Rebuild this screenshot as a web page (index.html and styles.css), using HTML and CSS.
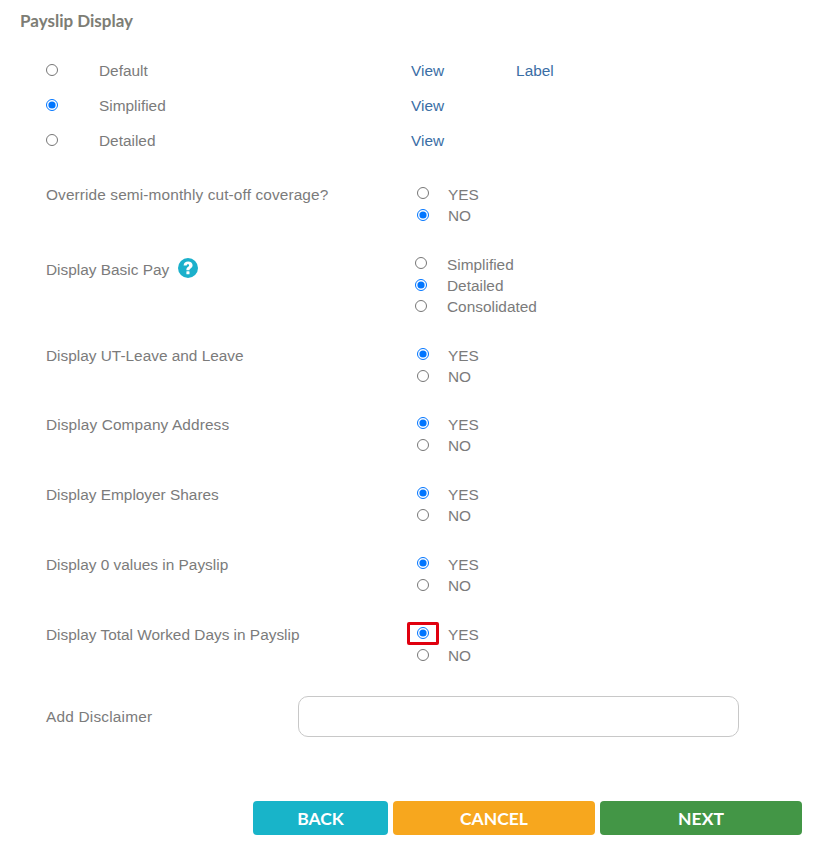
FILE: index.html
```html
<!DOCTYPE html>
<html lang="en">
	<head>
		<meta charset="utf-8">
		<meta name="viewport" content="width=device-width, initial-scale=1.0">
		<title>Payslip Display</title>
		<link rel="stylesheet" href="styles.css">
	</head>
	<body>
		<h1 class="title">Payslip Display</h1>

		<div class="layouts">
			<div class="layout-row">
				<input type="radio" name="layout">
				<span class="layout-name">Default</span>
				<a class="link" href="#">View</a>
				<a class="link link-label" href="#">Label</a>
			</div>
			<div class="layout-row">
				<input type="radio" name="layout" checked>
				<span class="layout-name">Simplified</span>
				<a class="link" href="#">View</a>
			</div>
			<div class="layout-row">
				<input type="radio" name="layout">
				<span class="layout-name">Detailed</span>
				<a class="link" href="#">View</a>
			</div>
		</div>

		<div class="setting setting-first">
			<div class="setting-name setting-name-long">Override semi-monthly cut-off coverage?</div>
			<div class="options">
				<label class="option"><input type="radio" name="override"><span>YES</span></label>
				<label class="option"><input type="radio" name="override" checked><span>NO</span></label>
			</div>
		</div>

		<div class="setting">
			<div class="setting-name setting-name-help">
				Display Basic Pay
				<svg class="help" viewBox="0 0 20 20" width="20" height="20">
					<circle cx="10" cy="10" r="10" fill="#1bb0cb"/>
					<path d="M5.6 7.4C5.7 4.8 7.6 3.4 10.1 3.4c2.6 0 4.5 1.5 4.5 3.8 0 1.6-.9 2.4-2 3.2-.9.6-1.1 1-1.1 1.8H8.4c-.1-1.7.4-2.5 1.5-3.3.8-.6 1.2-1 1.2-1.5 0-.7-.4-1.1-1.1-1.1-.8 0-1.2.5-1.3 1.3z" fill="#fff"/>
					<rect x="8.4" y="13.2" width="3.1" height="3" rx=".5" fill="#fff"/>
				</svg>
			</div>
			<div class="options options-wide">
				<label class="option"><input type="radio" name="basic"><span>Simplified</span></label>
				<label class="option"><input type="radio" name="basic" checked><span>Detailed</span></label>
				<label class="option"><input type="radio" name="basic"><span>Consolidated</span></label>
			</div>
		</div>

		<div class="setting setting-leave">
			<div class="setting-name">Display UT-Leave and Leave</div>
			<div class="options">
				<label class="option"><input type="radio" name="leave" checked><span>YES</span></label>
				<label class="option"><input type="radio" name="leave"><span>NO</span></label>
			</div>
		</div>

		<div class="setting">
			<div class="setting-name setting-name-long">Display Company Address</div>
			<div class="options">
				<label class="option"><input type="radio" name="address" checked><span>YES</span></label>
				<label class="option"><input type="radio" name="address"><span>NO</span></label>
			</div>
		</div>

		<div class="setting">
			<div class="setting-name">Display Employer Shares</div>
			<div class="options">
				<label class="option"><input type="radio" name="shares" checked><span>YES</span></label>
				<label class="option"><input type="radio" name="shares"><span>NO</span></label>
			</div>
		</div>

		<div class="setting">
			<div class="setting-name">Display 0 values in Payslip</div>
			<div class="options">
				<label class="option"><input type="radio" name="zero" checked><span>YES</span></label>
				<label class="option"><input type="radio" name="zero"><span>NO</span></label>
			</div>
		</div>

		<div class="setting">
			<div class="setting-name">Display Total Worked Days in Payslip</div>
			<div class="options">
				<label class="option option-marked"><input type="radio" name="days" checked><span>YES</span></label>
				<label class="option"><input type="radio" name="days"><span>NO</span></label>
			</div>
		</div>

		<div class="disclaimer">
			<label class="disclaimer-name" for="disclaimer">Add Disclaimer</label>
			<input type="text" id="disclaimer">
		</div>

		<div class="actions">
			<button class="btn btn-back">BACK</button>
			<button class="btn btn-cancel">CANCEL</button>
			<button class="btn btn-next">NEXT</button>
		</div>
	</body>
</html>
```

FILE: styles.css
```css
body {
	margin: 0;
	padding: 11px 16px 0 20px;
	background-color: white;
	color: #7b7b7b;
	font-family: "Liberation Sans", Arial, sans-serif;
	font-size: 15.4px;
	line-height: 21px;
}
input[type="radio"] {
	width: 12px;
	height: 12px;
	margin: 0;
	flex: none;
}
.title {
	margin: 0;
	font-family: Lato, sans-serif;
	font-size: 17px;
	font-weight: bold;
	line-height: 20px;
	color: #7d7d75;
}
.layouts {
	margin-top: 22px;
	padding-left: 26px;
}
.layout-row {
	display: flex;
	align-items: center;
	height: 35px;
}
.layout-row input {
	margin-top: -2px;
}
.layout-name {
	width: 312px;
	margin-left: 41px;
}
.link {
	color: #3a6ea5;
	text-decoration: none;
}
.link-label {
	margin-left: 72px;
}
.setting {
	display: grid;
	grid-template-columns: 371px 1fr;
	padding-left: 26px;
	margin-bottom: 28px;
}
.setting-first {
	margin-top: 26px;
}
.setting-leave {
	margin-bottom: 27px;
}
.setting-name-long {
	letter-spacing: .12px;
}
.setting-name-help {
	padding-top: 4px;
}
.help {
	margin-left: 5px;
	vertical-align: -3px;
}
.option {
	display: flex;
	align-items: center;
	gap: 19px;
	height: 21px;
}
.option input {
	margin-top: -3px;
}
.option + .option input {
	margin-top: -1px;
}
.options-wide {
	margin-left: -2px;
}
.options-wide .option {
	gap: 20px;
}
.option-marked {
	position: relative;
}
.option-marked::before {
	content: "";
	position: absolute;
	left: -10px;
	top: -2px;
	width: 26px;
	height: 17px;
	border: 3px solid #e0000f;
	border-radius: 2px;
}
.disclaimer {
	display: flex;
	align-items: center;
	margin-top: 30px;
	padding-left: 26px;
}
.disclaimer-name {
	width: 252px;
	letter-spacing: .2px;
}
#disclaimer {
	box-sizing: border-box;
	width: 441px;
	height: 41px;
	padding: 0 12px;
	border: 1px solid #c8c8c8;
	border-radius: 10px;
	outline: none;
}
.actions {
	display: flex;
	justify-content: flex-end;
	gap: 5px;
	margin-top: 64px;
}
.btn {
	height: 34px;
	padding: 0;
	border: none;
	border-radius: 4px;
	color: white;
	font-family: Lato, sans-serif;
	font-size: 17.5px;
	font-weight: bold;
	cursor: pointer;
}
.btn-back {
	width: 135px;
	background-color: #18b4c9;
}
.btn-cancel {
	width: 202px;
	background-color: #f7a71e;
}
.btn-next {
	width: 202px;
	background-color: #439646;
}
```
